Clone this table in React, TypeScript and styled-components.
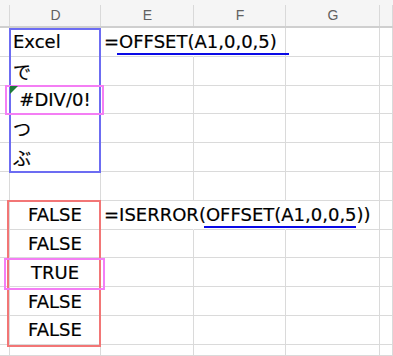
import React from "react";
import styled, { createGlobalStyle } from "styled-components";

const GlobalStyle = createGlobalStyle`
  html, body {
    margin: 0;
    padding: 0;
    background: #ffffff;
    overflow: hidden;
  }
`;

const ROW = 28.8;

const Sheet = styled.div`
  position: relative;
  display: grid;
  grid-template-columns: 10px 91px 93px 92px 94px 1fr;
  grid-template-rows: 28px repeat(11, ${ROW}px) 1fr;
  width: 393px;
  height: 356px;
  overflow: hidden;
  font-family: "DejaVu Sans", "Noto Sans CJK JP", sans-serif;
`;

const HeaderCell = styled.div`
  position: relative;
  display: flex;
  align-items: center;
  justify-content: center;
  padding-top: 4px;
  background: #f5f5f5;
  border-bottom: 2px solid #cfcfcf;
  color: #616161;
  font-family: "Liberation Sans", Arial, sans-serif;
  font-size: 14px;

  &::after {
    content: "";
    position: absolute;
    right: 0;
    top: 5px;
    bottom: 0;
    width: 1px;
    background: #d9d9d9;
  }
`;

const Cell = styled.div<{ $open?: boolean; $align?: "left" | "center" }>`
  position: relative;
  display: flex;
  align-items: center;
  justify-content: ${(p) => (p.$align === "center" ? "center" : "flex-start")};
  padding-left: ${(p) => (p.$align === "center" ? "0" : "3px")};
  border-right: 1px solid ${(p) => (p.$open ? "transparent" : "#dadada")};
  border-bottom: 1px solid #dadada;
  color: #000;
  font-size: 18px;
  -webkit-text-stroke: 0.2px #000;
  white-space: nowrap;
  overflow: visible;
  z-index: ${(p) => (p.$open ? 1 : "auto")};
`;

const ErrorMark = styled.span`
  position: absolute;
  left: 0;
  top: 0;
  width: 0;
  height: 0;
  border-top: 8px solid #1e7b3a;
  border-right: 8px solid transparent;
  z-index: 4;
`;

// hand-drawn marker under a reference; $extend lets it run past the text
const Marked = styled.span<{ $extend: number }>`
  position: relative;

  &::after {
    content: "";
    position: absolute;
    left: -2px;
    right: ${(p) => -p.$extend}px;
    bottom: -3px;
    height: 2px;
    background: #0a0ae6;
  }
`;

// annotation frames, placed on the sheet's own grid lines
const Frame = styled.div<{
  $color: string;
  $row: string;
  $inset: string;
}>`
  position: absolute;
  grid-column: 2 / 3;
  grid-row: ${(p) => p.$row};
  inset: ${(p) => p.$inset};
  border: 2px solid ${(p) => p.$color};
  pointer-events: none;
  z-index: 3;
`;

type Row = {
  d?: string;
  pre?: string;
  ref?: string;
  post?: string;
  extend?: number;
  err?: boolean;
  center?: boolean;
  spill?: number;
};

const rows: Row[] = [
  { d: "Excel", pre: "=", ref: "OFFSET(A1,0,0,5)", extend: 12, spill: 1 },
  { d: "で" },
  { d: "#DIV/0!", err: true, center: true },
  { d: "つ" },
  { d: "ぶ" },
  {},
  {
    d: "FALSE",
    pre: "=ISERROR(",
    ref: "OFFSET(A1,0,0,5",
    post: "))",
    extend: -1,
    center: true,
    spill: 2,
  },
  { d: "FALSE", center: true },
  { d: "TRUE", center: true },
  { d: "FALSE", center: true },
  { d: "FALSE", center: true },
  {},
];

const App = () => {
  return (
    <>
      <GlobalStyle />
      <Sheet>
        {["", "D", "E", "F", "G", ""].map((h, i) => (
          <HeaderCell key={i}>{h}</HeaderCell>
        ))}
        {rows.map((r, i) => (
          <React.Fragment key={i}>
            <Cell />
            <Cell $align={r.center ? "center" : "left"}>
              {r.err && <ErrorMark />}
              {r.d}
            </Cell>
            <Cell $open={(r.spill ?? 0) >= 1}>
              {r.ref && (
                <span>
                  {r.pre}
                  <Marked $extend={r.extend ?? 0}>{r.ref}</Marked>
                  {r.post}
                </span>
              )}
            </Cell>
            <Cell $open={(r.spill ?? 0) >= 2} />
            <Cell />
            <Cell />
          </React.Fragment>
        ))}

        <Frame $color="#6c6cf2" $row="2 / 7" $inset="0 0 -1px -1px" />
        <Frame $color="#f47ef4" $row="4 / 5" $inset="-1px -3px -1px -5px" />
        <Frame $color="#f27676" $row="8 / 13" $inset="-1px 0 -2px -3px" />
        <Frame $color="#f47ef4" $row="10 / 11" $inset="0 -4px -3px -6px" />
      </Sheet>
    </>
  );
};

export default App;
